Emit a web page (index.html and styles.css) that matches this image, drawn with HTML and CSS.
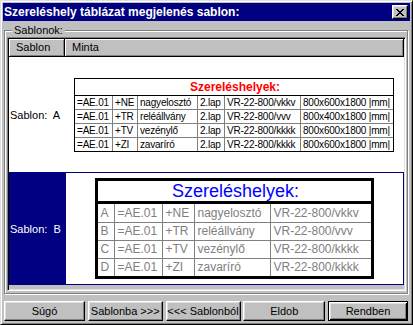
FILE: index.html
```html
<!DOCTYPE html>
<html lang="hu">
<head>
    <meta charset="UTF-8">
    <title>Szereléshely táblázat megjelenés sablon</title>
    <link rel="stylesheet" href="styles.css">
</head>
<body>
<div class="window">
    <div class="titlebar">
        <span class="title">Szereléshely táblázat megjelenés sablon:</span>
        <span class="close">
            <svg width="8" height="7" viewBox="0 0 8 7"><path d="M0 0h2v1h1v1h2V1h1V0h2v1H7v1H6v1H5v1h1v1h1v1h1v1H6V6H5V5H3v1H2v1H0V6h1V5h1V4h1V3H2V2H1V1H0z" fill="#000"/></svg>
        </span>
    </div>

    <div class="group">
        <span class="group-label">Sablonok:</span>
        <div class="grid">
            <div class="grid-head">
                <div class="hcell col-name">Sablon</div>
                <div class="hcell col-sample">Minta</div>
            </div>

            <div class="grid-row row-a">
                <div class="cell-name">Sablon:&nbsp; A</div>
                <div class="cell-sample">
                    <table class="tpl-a">
                        <colgroup>
                            <col class="a1"><col class="a2"><col class="a3"><col class="a4"><col class="a5"><col class="a6">
                        </colgroup>
                        <tr><td colspan="6" class="tpl-a-title">Szereléshelyek:</td></tr>
                        <tr><td>=AE.01</td><td>+NE</td><td>nagyelosztó</td><td>2.lap</td><td>VR-22-800/vkkv</td><td>800x600x1800 |mm|</td></tr>
                        <tr><td>=AE.01</td><td>+TR</td><td>reléállvány</td><td>2.lap</td><td>VR-22-800/vvv</td><td>800x400x1800 |mm|</td></tr>
                        <tr><td>=AE.01</td><td>+TV</td><td>vezénylő</td><td>2.lap</td><td>VR-22-800/kkkk</td><td>800x600x1800 |mm|</td></tr>
                        <tr><td>=AE.01</td><td>+ZI</td><td>zavaríró</td><td>2.lap</td><td>VR-22-800/kkkk</td><td>800x600x1800 |mm|</td></tr>
                    </table>
                </div>
            </div>

            <div class="grid-row row-b selected">
                <div class="cell-name">Sablon:&nbsp; B</div>
                <div class="cell-sample">
                    <table class="tpl-b">
                        <colgroup>
                            <col class="b1"><col class="b2"><col class="b3"><col class="b4"><col class="b5">
                        </colgroup>
                        <tr><td colspan="5" class="tpl-b-title">Szereléshelyek:</td></tr>
                        <tr><td>A</td><td>=AE.01</td><td>+NE</td><td>nagyelosztó</td><td>VR-22-800/vkkv</td></tr>
                        <tr><td>B</td><td>=AE.01</td><td>+TR</td><td>reléállvány</td><td>VR-22-800/vvv</td></tr>
                        <tr><td>C</td><td>=AE.01</td><td>+TV</td><td>vezénylő</td><td>VR-22-800/kkkk</td></tr>
                        <tr><td>D</td><td>=AE.01</td><td>+ZI</td><td>zavaríró</td><td>VR-22-800/kkkk</td></tr>
                    </table>
                </div>
            </div>
        </div>
    </div>

    <div class="buttons">
        <button class="btn w-help">Súgó</button>
        <button class="btn w-to">Sablonba &gt;&gt;&gt;</button>
        <button class="btn w-from">&lt;&lt;&lt; Sablonból</button>
        <button class="btn w-drop">Eldob</button>
        <button class="btn btn-default w-ok">Rendben</button>
    </div>
</div>
</body>
</html>
```

FILE: styles.css
```css
body {
    margin: 0;
    background-color: #c0c0c0;
    font-family: "Liberation Sans", Arial, sans-serif;
    font-size: 11px;
    color: #000;
}
.window {
    box-sizing: border-box;
    width: 413px;
    height: 325px;
    padding: 2px;
    display: flex;
    flex-direction: column;
    background-color: #c0c0c0;
    border: 1px solid;
    border-color: #dfdfdf #000 #000 #dfdfdf;
    box-shadow: inset 1px 1px #fff, inset -1px -1px #808080;
}
.titlebar {
    height: 18px;
    display: flex;
    align-items: flex-start;
    background-color: #000080;
    color: #fff;
}
.title {
    margin-left: 1px;
    font-weight: bold;
    font-size: 12px;
    line-height: 18px;
}
.close {
    box-sizing: border-box;
    margin: 2px 2px 0 auto;
    width: 16px;
    height: 14px;
    display: flex;
    align-items: center;
    justify-content: center;
    background-color: #c0c0c0;
    border: 1px solid;
    border-color: #fff #000 #000 #fff;
    box-shadow: inset -1px -1px #808080, inset 1px 1px #dfdfdf;
}
.group {
    position: relative;
    margin: 9px 2px 0 1px;
    height: 264px;
    box-sizing: border-box;
    padding: 6px 1px 2px 2px;
    border: 1px solid #808080;
    box-shadow: 1px 1px 0 #fff, inset 1px 1px 0 #fff;
}
.group-label {
    position: absolute;
    left: 7px;
    top: -8px;
    padding: 0 2px 0 2px;
    background-color: #c0c0c0;
    line-height: 14px;
}
.grid {
    box-sizing: border-box;
    height: 254px;
    background-color: #c0c0c0;
    border: 1px solid;
    border-color: #808080 #fff #fff #808080;
    box-shadow: inset 1px 1px #000, inset -1px -1px #dfdfdf;
    padding: 1px;
    display: flex;
    flex-direction: column;
}
.grid-head {
    display: flex;
    height: 18px;
}
.hcell {
    box-sizing: border-box;
    height: 18px;
    line-height: 17px;
    padding-left: 7px;
    border-right: 1px solid #000;
    border-bottom: 1px solid #000;
    box-shadow: inset 1px 1px #fff, inset -1px -1px #808080;
}
.col-name {
    width: 56px;
}
.col-sample {
    flex: 1;
}
.grid-row {
    display: flex;
    background-color: #fff;
}
.row-a {
    height: 115px;
}
.row-b {
    height: 113px;
}
.cell-name {
    box-sizing: border-box;
    width: 56px;
    padding-left: 1px;
    display: flex;
    align-items: center;
    white-space: nowrap;
}
.cell-sample {
    flex: 1;
    display: flex;
    align-items: center;
    justify-content: center;
}
.selected .cell-name {
    background-color: #000080;
    color: #fff;
}
.selected .cell-sample {
    border: 1px solid #000080;
}

/* sablon A */
.tpl-a {
    border-collapse: separate;
    border-spacing: 0;
    table-layout: fixed;
    width: 320px;
    border: 1px solid #000;
    font-size: 10px;
    margin-left: -1px;
}
.tpl-a td {
    height: 13px;
    line-height: 13px;
    padding: 0 0 0 2px;
    border-top: 1px solid #808080;
    border-left: 1px solid #808080;
    white-space: nowrap;
    overflow: hidden;
    letter-spacing: -0.2px;
}
.tpl-a td:first-child {
    border-left: 0;
}
.tpl-a tr:nth-child(2) td {
    border-top: 0;
}
.tpl-a .tpl-a-title {
    height: 16px;
    line-height: 16px;
    border-top: 0;
    border-bottom: 1px solid #000;
    text-align: center;
    color: #f00;
    font-weight: bold;
    font-size: 12px;
    letter-spacing: 0;
}
.a1 { width: 37px; }
.a2 { width: 25px; }
.a3 { width: 60px; }
.a4 { width: 27px; }
.a5 { width: 76px; }
.a6 { width: 93px; }

/* sablon B */
.tpl-b {
    border-collapse: separate;
    border-spacing: 0;
    table-layout: fixed;
    width: 278px;
    border: 3px solid #000;
    font-size: 12px;
    color: #808080;
}
.tpl-b td {
    height: 17px;
    line-height: 17px;
    padding: 0 0 0 2px;
    border-top: 1px solid #808080;
    border-left: 1px solid #808080;
    white-space: nowrap;
    overflow: hidden;
}
.tpl-b td:first-child {
    border-left: 0;
}
.tpl-b tr:nth-child(2) td {
    border-top: 0;
    height: 18px;
}
.tpl-b .tpl-b-title {
    height: 18px;
    line-height: 20px;
    border-top: 0;
    border-bottom: 3px solid #000;
    text-align: center;
    color: #00f;
    font-size: 18px;
}
.b1 { width: 16px; }
.b2 { width: 48px; }
.b3 { width: 32px; }
.b4 { width: 76px; }
.b5 { width: 100px; }

.buttons {
    display: flex;
    justify-content: space-between;
    margin: 7px 0 0 1px;
    padding-right: 2px;
}
.btn {
    box-sizing: border-box;
    height: 20px;
    padding: 0;
    background-color: #c0c0c0;
    font-family: "Liberation Sans", Arial, sans-serif;
    font-size: 11px;
    color: #000;
    border: 1px solid;
    border-color: #fff #000 #000 #fff;
    box-shadow: inset -1px -1px #808080, inset 1px 1px #dfdfdf;
}
.btn-default {
    border: 1px solid #000;
    box-shadow: inset 1px 1px #fff, inset -1px -1px #000, inset 2px 2px #dfdfdf, inset -2px -2px #808080;
}
.w-help { width: 81px; }
.w-to { width: 75px; }
.w-from { width: 75px; }
.w-drop { width: 82px; }
.w-ok { width: 80px; }
```
